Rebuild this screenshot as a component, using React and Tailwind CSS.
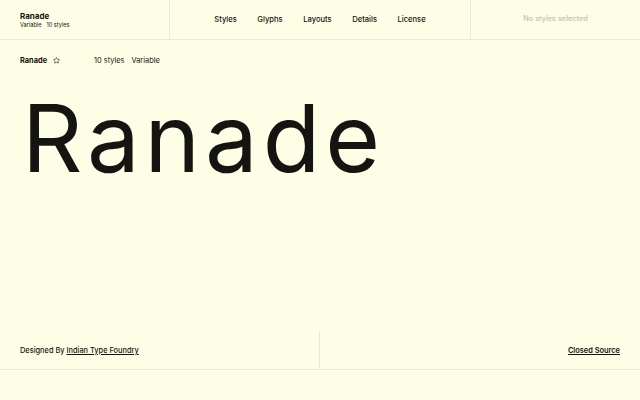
import { Star } from "lucide-react";

const navItems = ["Styles", "Glyphs", "Layouts", "Details", "License"];

function App() {
  return (
    <div
      className="h-[400px] w-[640px] flex flex-col bg-[#fefee6] text-[#141410] overflow-hidden"
      style={{ fontFamily: "Inter, 'Liberation Sans', sans-serif" }}
    >
      {/* Header */}
      <header className="h-[40px] grid grid-cols-[170px_1fr_170px] border-b border-[#ececd4]">
        <div className="border-r border-[#ececd4] pl-5 pt-[1px] flex flex-col justify-center">
          <div className="text-[8px] font-bold leading-[10px]">Ranade</div>
          <div className="text-[5.6px] leading-[9px] flex gap-[5px]">
            <span>Variable</span>
            <span>10 styles</span>
          </div>
        </div>
        <nav className="flex items-center justify-center gap-[20.5px] pt-[1px] text-[7.6px] font-medium">
          {navItems.map((item) => (
            <span key={item}>{item}</span>
          ))}
        </nav>
        <div className="border-l border-[#ececd4] flex items-center justify-center text-[7.3px] font-medium text-[#c4c4ac]">
          No styles selected
        </div>
      </header>

      {/* Sub row */}
      <div className="h-[41px] flex items-center pl-5 text-[7.4px]">
        <span className="font-bold">Ranade</span>
        <Star className="w-[7px] h-[7px] ml-[6px]" strokeWidth={2} />
        <span className="ml-[34px]">10 styles</span>
        <span className="ml-[7px]">Variable</span>
      </div>

      {/* Hero */}
      <div className="h-[250px] pl-[22px]">
        <h1 className="text-[94px] leading-[94px] font-normal tracking-[4.9px] mt-[10px]">
          Ranade
        </h1>
      </div>

      {/* Footer */}
      <footer className="h-[39px] grid grid-cols-2 border-b border-[#ececd4] text-[7.4px] font-medium">
        <div className="border-r border-[#ececd4] pl-5 pt-[1px] flex items-center">
          Designed By&nbsp;
          <span className="underline underline-offset-1">Indian Type Foundry</span>
        </div>
        <div className="pr-5 pt-[1px] flex items-center justify-end">
          <span className="underline underline-offset-1 font-semibold">Closed Source</span>
        </div>
      </footer>
    </div>
  );
}

export default App;
